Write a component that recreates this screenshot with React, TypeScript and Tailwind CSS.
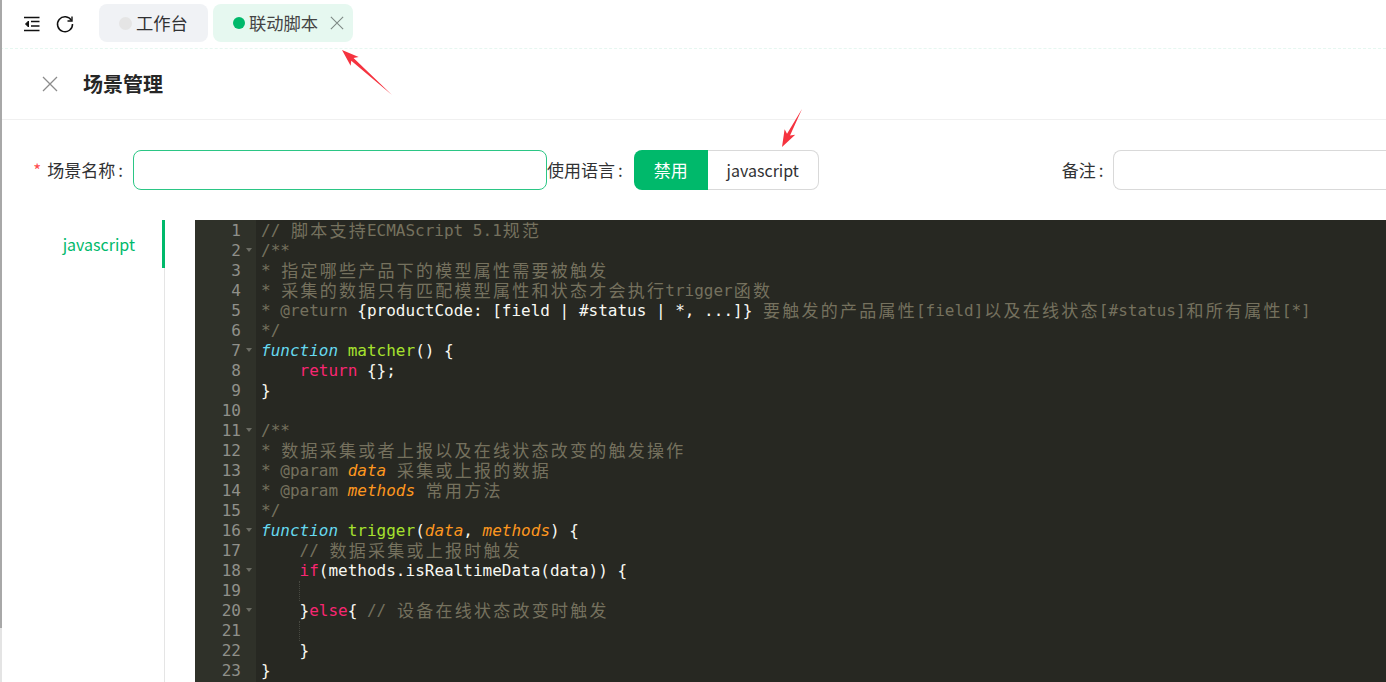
const mono = "font-['DejaVu_Sans_Mono','Liberation_Mono',monospace]";
const cjk = /[\u4e00-\u9fff]/;

// ace gives every CJK char two cells
const Cells = ({ text, className }: { text: string; className?: string }) => {
    const parts = text.split(/([\u4e00-\u9fff])/).filter(Boolean);
    return (
        <span className={className}>
            {parts.map((p, i) =>
                cjk.test(p) ? (
                    <span key={i} className="inline-block w-[19.26px] h-5 pl-px align-top text-[17px] leading-[17px] not-italic font-['Noto_Sans_CJK_SC',sans-serif]">{p}</span>
                ) : (
                    <span key={i}>{p}</span>
                )
            )}
        </span>
    );
};

const com = "text-[#75715e]";
const white = "text-[#f8f8f2]";
const pink = "text-[#f92672]";
const blue = "italic text-[#66d9ef]";
const green = "text-[#a6e22e]";
const orange = "italic text-[#fd971f]";

type Seg = [string, string];

const lines: { segs: Seg[]; fold?: boolean; guide?: boolean }[] = [
    { segs: [["// 脚本支持ECMAScript 5.1规范", com]] },
    { segs: [["/**", com]], fold: true },
    { segs: [["* 指定哪些产品下的模型属性需要被触发", com]] },
    { segs: [["* 采集的数据只有匹配模型属性和状态才会执行trigger函数", com]] },
    { segs: [["* @return ", com], ["{productCode: [field | #status | *, ...]}", white], [" 要触发的产品属性[field]以及在线状态[#status]和所有属性[*]", com]] },
    { segs: [["*/", com]] },
    { segs: [["function", blue], [" ", white], ["matcher", green], ["() {", white]], fold: true },
    { segs: [["    ", white], ["return", pink], [" {};", white]] },
    { segs: [["}", white]] },
    { segs: [] },
    { segs: [["/**", com]], fold: true },
    { segs: [["* 数据采集或者上报以及在线状态改变的触发操作", com]] },
    { segs: [["* @param ", com], ["data", orange], [" 采集或上报的数据", com]] },
    { segs: [["* @param ", com], ["methods", orange], [" 常用方法", com]] },
    { segs: [["*/", com]] },
    { segs: [["function", blue], [" ", white], ["trigger", green], ["(", white], ["data", orange], [", ", white], ["methods", orange], [") {", white]], fold: true },
    { segs: [["    ", white], ["// 数据采集或上报时触发", com]] },
    { segs: [["    ", white], ["if", pink], ["(methods.isRealtimeData(data)) {", white]], fold: true },
    { segs: [], guide: true },
    { segs: [["    }", white], ["else", pink], ["{ ", white], ["// 设备在线状态改变时触发", com]], fold: true },
    { segs: [], guide: true },
    { segs: [["    }", white]] },
    { segs: [["}", white]] },
];

const Editor = () => (
    <div className={`flex-1 h-[462px] overflow-hidden bg-[#272822] flex text-[16px] leading-[20px] ${mono}`}>
        <div className="w-[61px] shrink-0 bg-[#2f3129] text-[#8f908a] pt-px">
            {lines.map((l, i) => (
                <div key={i} className="h-5 relative text-right pr-[15px]">
                    {i + 1}
                    {l.fold && <span className="absolute right-[4px] top-[7px] border-x-[3.5px] border-x-transparent border-t-[4px] border-t-[#6b6c64]" />}
                </div>
            ))}
        </div>
        <div className="flex-1 pl-[5px] pt-px whitespace-pre">
            {lines.map((l, i) => (
                <div key={i} className="h-5 relative">
                    {l.guide && <span className="absolute left-[38px] top-0 h-5 border-l border-dotted border-[#484941]" />}
                    {l.segs.map((s, j) => <Cells key={j} text={s[0]} className={s[1]} />)}
                </div>
            ))}
        </div>
    </div>
);

const Cross = ({ size, color, className }: { size: number; color: string; className?: string }) => (
    <svg className={className} width={size} height={size} viewBox="0 0 16 16" fill="none" stroke={color} strokeWidth="1.3">
        <path d="M1 1l14 14M15 1L1 15" />
    </svg>
);

const Arrow = ({ x1, y1, x2, y2 }: { x1: number; y1: number; x2: number; y2: number }) => {
    // thin tail, wide barbed head, pointing from 1 to 2
    const a = Math.atan2(y2 - y1, x2 - x1);
    const p = (d: number, o: number) => `${x2 - d * Math.cos(a) - o * Math.sin(a)},${y2 - d * Math.sin(a) + o * Math.cos(a)}`;
    return <polygon points={`${x1},${y1} ${p(14, 1.7)} ${p(17, 6)} ${x2},${y2} ${p(17, -6)} ${p(14, -1.7)}`} fill="#f5333f" />;
};

const App = () => {
    return (
        <div className="relative w-[1386px] h-[682px] overflow-hidden bg-white font-['Noto_Sans_CJK_SC','Liberation_Sans',sans-serif] text-[#303133]">
            <div className="absolute left-0 top-0 w-[2px] h-[628px] bg-[#a8a8a8]" />
            <div className="absolute left-0 top-[628px] w-[2px] h-[54px] bg-[#e4e4e4]" />
            <div className="h-[49px] flex items-start pl-[24px] border-b border-dashed border-[#e6f7f0]">
                <svg className="mt-[16px] w-[16px] h-[16px]" viewBox="0 0 16 16" fill="none" stroke="#111" strokeWidth="1.4">
                    <path d="M0 1.5h15.5M7 5.5h8.5M7 10h8.5M0 14.5h15.5" />
                    <path d="M4.5 5L1.5 8l3 3z" fill="#111" strokeWidth="1" />
                </svg>
                <svg className="ml-[15px] mt-[14px] w-[20px] h-[20px]" viewBox="0 0 20 20" fill="none" stroke="#111" strokeWidth="1.5">
                    <path d="M16.5 6.5A7.5 7.5 0 1 0 17.5 10" />
                    <path d="M17 2.5v4.5h-4.5" strokeWidth="1.4" />
                </svg>
                <div className="ml-[24px] mt-1 h-[38px] w-[109px] rounded-lg bg-[#f0f2f5] flex items-center pl-5 text-[17.3px]">
                    <span className="w-[13px] h-[13px] rounded-full bg-[#e5e5e5] mr-1" />
                    工作台
                </div>
                <div className="ml-[5px] mt-1 h-[38px] w-[140px] rounded-lg bg-[#e6f8f0] flex items-center pl-5 text-[17.3px] text-[#444]">
                    <span className="w-3 h-3 rounded-full bg-[#00b96b] mr-1" />
                    联动脚本
                    <Cross size={14} color="#7f8a86" className="ml-[12px]" />
                </div>
            </div>
            <div className="h-[71px] flex items-center border-b border-[#f0f0f0] pl-[42px]">
                <Cross size={16} color="#8c8c8c" />
                <span className="ml-[25px] text-[20px] font-bold text-[#262626]">场景管理</span>
            </div>
            <div className="h-[40px] mt-[30px] flex items-center text-[17px]">
                <div className="w-[133px] shrink-0 text-right pr-[10px]">
                    <span className="text-[#ff4d4f] mr-[6px]">*</span>场景名称<span className="ml-[3px]">:</span>
                </div>
                <div className="w-[414px] h-10 rounded-lg border border-[#2bc685]" />
                <span>使用语言<span className="ml-[3px]">:</span></span>
                <div className="ml-[11px] flex h-10 w-[185px]">
                    <div className="w-[74px] rounded-l-lg bg-[#00b96b] text-white flex items-center justify-center">禁用</div>
                    <div className="flex-1 rounded-r-lg border border-l-0 border-[#d9d9d9] flex items-center justify-center text-[16px]">javascript</div>
                </div>
                <span className="ml-[243px]">备注<span className="ml-[3px]">:</span></span>
                <div className="ml-[10px] flex-1 h-10 rounded-l-lg border border-r-0 border-[#d9d9d9]" />
            </div>
            <div className="mt-[30px] flex">
                <div className="w-[165px] shrink-0 h-[462px] border-r border-[#e5e5e5] relative">
                    <div className="h-[48px] flex items-center justify-end pr-[29px] text-[16px] text-[#00b96b]">javascript</div>
                    <span className="absolute right-[-1px] top-0 w-[3px] h-[48px] bg-[#00b96b]" />
                </div>
                <div className="w-[30px] shrink-0" />
                <Editor />
            </div>
            <svg className="absolute inset-0 pointer-events-none" width="1386" height="682">
                <Arrow x1={392} y1={95} x2={342} y2={50} />
                <Arrow x1={802} y1={109} x2={782} y2={147} />
            </svg>
        </div>
    );
};

export default App;
